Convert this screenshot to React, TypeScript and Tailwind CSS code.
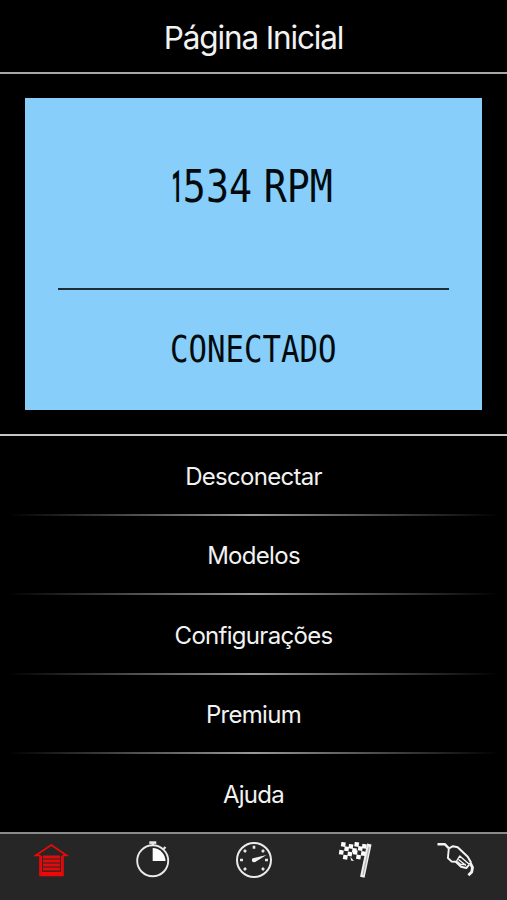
import type { ReactNode } from "react"
import clsx from "clsx"

const menuItems = ["Desconectar", "Modelos", "Configurações", "Premium", "Ajuda"]

// centres of the white squares on the chequered flag
const flagSquares = [
  [6.3, 2.4],
  [4.3, 10.3],
  [9.6, 6.8],
  [8.3, 15.2],
  [13.9, 4.4],
  [12.8, 12],
  [17.4, 8.4],
  [19.7, 2.4],
  [18.2, 10.3],
  [23.3, 6.5],
  [21.5, 15],
  [27.3, 4.3],
  [26.3, 11.6],
]

function GarageIcon() {
  return (
    <svg width="36" height="36" viewBox="0 0 36 36" fill="none" stroke="#ee0808">
      <path d="M7 32.500V12.500H2.500L18.300 2l15.500 10.500H30v20z" strokeWidth="1.600" />
      <path d="M10 14h17M10 18h17M10 22h17M10 26h17" strokeWidth="3" stroke="#e00c0c" />
      <path d="M8 30.600h21" strokeWidth="3.600" />
      <path d="M8.300 13v18M28.700 13v18" strokeWidth="1.600" />
    </svg>
  )
}

function StopwatchIcon() {
  return (
    <svg width="36" height="40" viewBox="0 0 36 40" fill="none" stroke="#eaeaea">
      <circle cx="18.700" cy="21.800" r="15.500" strokeWidth="1.900" />
      <path d="M15.300 3.600h7" strokeWidth="2.600" />
      <path d="M18.800 4.500v2M29.500 10l2-2" strokeWidth="2.200" />
      <path d="M18.700 22V9A13 13 0 0 1 31.500 22z" fill="#ffffff" stroke="none" />
    </svg>
  )
}

function GaugeIcon() {
  return (
    <svg width="38" height="38" viewBox="0 0 38 38" fill="#f0f0f0">
      <circle cx="19" cy="19" r="17" fill="none" stroke="#eaeaea" strokeWidth="2" />
      <path
        d="M19 4.800v3M5 19h3M30 19h3M9 9l2 2M29 9l-2 2M9 29l2-2M29 29l-2-2"
        stroke="#e4e4e4"
        strokeWidth="2.600"
      />
      <path d="M18.200 17.200L31.500 14 20.200 20.900z" />
      <circle cx="19" cy="19.100" r="2.200" />
    </svg>
  )
}

function FlagIcon() {
  return (
    <svg width="36" height="38" viewBox="0 0 36 38" fill="#ffffff">
      {flagSquares.map(([x, y]) => (
        <rect key={`${x}-${y}`} x={x - 2.2} y={y - 2.2} width="4.4" height="4.4" transform={`rotate(8 ${x} ${y})`} />
      ))}
      <path d="M13.500 15l3.500 4-3-.5z" />
      <path d="M32.300 2L25.300 35.300" stroke="#efefef" strokeWidth="4.600" />
      <path d="M32 5L26 33" stroke="#b4b4b4" strokeWidth="1.200" />
    </svg>
  )
}

function FuelNozzleIcon() {
  return (
    <svg width="38" height="36" viewBox="0 0 38 36" fill="none" stroke="#f4f4f4" strokeLinejoin="round">
      <path d="M.5 2.300H8l4 4.200" strokeWidth="2.400" />
      <path d="M12 6.300l4-2.100 4.700 1.100 10 9.400L34 20.500" strokeWidth="2" />
      <path d="M11.800 6.500L10.900 16l3.800 3.600 4 .2 5.300 5 5.300 1.200 3-3.300" strokeWidth="1.900" />
      <path d="M19 20l3.700-6 9.500 8.200M21.500 17.500l7.500 6M20.300 19.500l3.500 3h5" strokeWidth="1.400" />
      <path d="M33 20.500l2.500 5-.8 4.500-3.300 3.200" strokeWidth="2.800" />
    </svg>
  )
}

function TabButton({ label, children, className }: { label: string; children: ReactNode; className?: string }) {
  return (
    <button aria-label={label} className={clsx("flex flex-1 items-start justify-center", className)}>
      {children}
    </button>
  )
}

export default function App() {
  return (
    <div className="flex h-[900px] w-full flex-col overflow-hidden bg-black font-['Inter',sans-serif] text-[#f2f2f2]">
      <header className="flex h-[74px] shrink-0 items-center justify-center border-b-2 border-[#a8a8a8] pt-1">
        <h1 className="text-[31.5px] leading-10 tracking-[-1.15px]">Página Inicial</h1>
      </header>

      {/* LCD display */}
      <section className="h-[360px] shrink-0 px-[25px] pt-6">
        <div className="flex h-[312px] flex-col bg-[#87cefa] px-[33px] font-['DejaVu_Sans_Mono',monospace] text-[#020a0e]">
          <div className="flex h-[192px] items-center justify-center border-b-2 border-[#1d2d36] pb-3">
            <p className="scale-x-[0.87] text-[44px] leading-none [word-spacing:-13px] whitespace-nowrap">
              <span className="-mr-1.5 -ml-2.5 inline-block scale-x-50 font-['Roboto',sans-serif] font-bold">1</span>534 RPM
            </p>
          </div>
          <div className="flex flex-1 items-center justify-center">
            <p className="-mt-0.5 scale-x-[0.83] text-[37px] leading-none whitespace-nowrap">CONECTADO</p>
          </div>
        </div>
      </section>

      <nav className="flex h-[398px] shrink-0 flex-col border-t-2 border-[#c4c4c4]">
        {menuItems.map((label, index) => (
          <div key={label} className="flex h-[79.5px] shrink-0 flex-col last:h-[78px]">
            <button className="flex-1 pt-1 text-2xl tracking-[-0.7px]">{label}</button>
            {index < menuItems.length - 1 && (
              <div className="mx-2 h-0.5 bg-linear-to-r from-transparent via-[#999999] to-transparent" />
            )}
          </div>
        ))}
      </nav>

      <footer className="flex h-[68px] shrink-0 border-t-2 border-[#8a8a8a] bg-[#262626]">
        <TabButton label="Página Inicial" className="pt-[9px]">
          <GarageIcon />
        </TabButton>
        <TabButton label="Cronômetro" className="pt-[5px]">
          <StopwatchIcon />
        </TabButton>
        <TabButton label="Painel" className="pt-[7px]">
          <GaugeIcon />
        </TabButton>
        <TabButton label="Corrida" className="pt-[8px]">
          <FlagIcon />
        </TabButton>
        <TabButton label="Combustível" className="pt-[8px]">
          <FuelNozzleIcon />
        </TabButton>
      </footer>
    </div>
  )
}
